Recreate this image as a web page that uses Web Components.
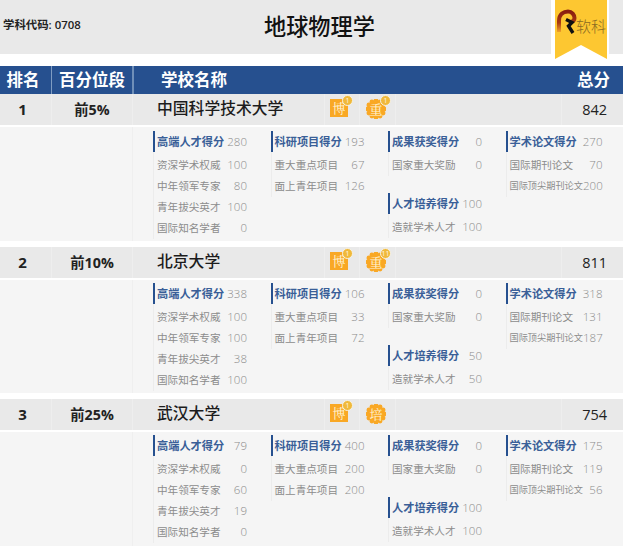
<!DOCTYPE html>
<html lang="zh"><head><meta charset="utf-8"><title>地球物理学</title>
<style>
html,body{margin:0;padding:0;background:#fff;height:546px;overflow:hidden;font-family:"Open Sans","Noto Sans CJK SC",sans-serif}
</style></head><body>
<rk-header code="0708" name="地球物理学"></rk-header>
<rk-head></rk-head>

<rk-school rank="1" pct="前5%" name="中国科学技术大学" score="842">
  <rk-badge kind="square" text="博" num="1"></rk-badge><rk-badge kind="round" text="重" num="1"></rk-badge>
  <rk-col slot="c1"><rk-group title="高端人才得分" score="280"><rk-item l="资深学术权威" v="100"></rk-item><rk-item l="中年领军专家" v="80"></rk-item><rk-item l="青年拔尖英才" v="100"></rk-item><rk-item l="国际知名学者" v="0"></rk-item></rk-group></rk-col>
  <rk-col slot="c2"><rk-group title="科研项目得分" score="193"><rk-item l="重大重点项目" v="67"></rk-item><rk-item l="面上青年项目" v="126"></rk-item></rk-group></rk-col>
  <rk-col slot="c3"><rk-group title="成果获奖得分" score="0"><rk-item l="国家重大奖励" v="0"></rk-item></rk-group><rk-group title="人才培养得分" score="100"><rk-item l="造就学术人才" v="100"></rk-item></rk-group></rk-col>
  <rk-col slot="c4"><rk-group wide title="学术论文得分" score="270"><rk-item l="国际期刊论文" v="70"></rk-item><rk-item small l="国际顶尖期刊论文" v="200"></rk-item></rk-group></rk-col>
</rk-school>

<rk-school tight rank="2" pct="前10%" name="北京大学" score="811">
  <rk-badge kind="square" text="博" num="1"></rk-badge><rk-badge kind="round" text="重" num="11"></rk-badge>
  <rk-col slot="c1"><rk-group title="高端人才得分" score="338"><rk-item l="资深学术权威" v="100"></rk-item><rk-item l="中年领军专家" v="100"></rk-item><rk-item l="青年拔尖英才" v="38"></rk-item><rk-item l="国际知名学者" v="100"></rk-item></rk-group></rk-col>
  <rk-col slot="c2"><rk-group title="科研项目得分" score="106"><rk-item l="重大重点项目" v="33"></rk-item><rk-item l="面上青年项目" v="72"></rk-item></rk-group></rk-col>
  <rk-col slot="c3"><rk-group title="成果获奖得分" score="0"><rk-item l="国家重大奖励" v="0"></rk-item></rk-group><rk-group title="人才培养得分" score="50"><rk-item l="造就学术人才" v="50"></rk-item></rk-group></rk-col>
  <rk-col slot="c4"><rk-group wide title="学术论文得分" score="318"><rk-item l="国际期刊论文" v="131"></rk-item><rk-item small l="国际顶尖期刊论文" v="187"></rk-item></rk-group></rk-col>
</rk-school>

<rk-school tight style="--dh:114px" rank="3" pct="前25%" name="武汉大学" score="754">
  <rk-badge kind="square" text="博" num="1"></rk-badge><rk-badge kind="round" text="培"></rk-badge>
  <rk-col slot="c1"><rk-group title="高端人才得分" score="79"><rk-item l="资深学术权威" v="0"></rk-item><rk-item l="中年领军专家" v="60"></rk-item><rk-item l="青年拔尖英才" v="19"></rk-item><rk-item l="国际知名学者" v="0"></rk-item></rk-group></rk-col>
  <rk-col slot="c2"><rk-group title="科研项目得分" score="400"><rk-item l="重大重点项目" v="200"></rk-item><rk-item l="面上青年项目" v="200"></rk-item></rk-group></rk-col>
  <rk-col slot="c3"><rk-group title="成果获奖得分" score="0"><rk-item l="国家重大奖励" v="0"></rk-item></rk-group><rk-group title="人才培养得分" score="100"><rk-item l="造就学术人才" v="100"></rk-item></rk-group></rk-col>
  <rk-col slot="c4"><rk-group wide title="学术论文得分" score="175"><rk-item l="国际期刊论文" v="119"></rk-item><rk-item small l="国际顶尖期刊论文" v="56"></rk-item></rk-group></rk-col>
</rk-school>

<script>
const FONT='"Open Sans","Noto Sans CJK SC",sans-serif';
function def(name,render){
  customElements.define(name,class extends HTMLElement{
    connectedCallback(){
      if(this.shadowRoot)return;
      this.attachShadow({mode:'open'}).innerHTML=render(this);
    }
  });
}
const a=(e,n)=>e.getAttribute(n)||'';
def('rk-header',e=>`<style>
:host{display:block;position:relative;height:66px;font-family:${FONT}}
.bar{height:54px;background:#e9e9e9;display:flex;align-items:center;position:relative}
.code{position:absolute;left:3px;top:17px;font-size:11.400px;line-height:16px;font-weight:600;color:#222}
h1{margin:0 0 0 264px;font-size:22.200px;line-height:48px;font-weight:500;color:#111;height:48px}
.gap{position:absolute;left:551px;top:0;width:58px;height:54px;background:#fff}
.rib{position:absolute;left:555px;top:0;width:52px;height:60px}
.rib svg{position:absolute;left:0;top:0}
.t{position:absolute;left:21px;top:16px;font-size:15px;line-height:20px;font-weight:300;color:#8a6b22;white-space:nowrap}
</style><div class="bar"><span class="code">学科代码: ${a(e,'code')}</span><h1>${a(e,'name')}</h1></div>
<div class="gap"></div>
<div class="rib"><svg width="52" height="60" viewBox="0 0 52 60"><defs><linearGradient id="g" x1="0" y1="0" x2="0" y2="1"><stop offset="0" stop-color="#8a1f10"/><stop offset=".55" stop-color="#a83a12"/><stop offset="1" stop-color="#f0a22a"/></linearGradient></defs>
<path d="M0 0H52V59L26 45 0 59Z" fill="#fdc731"/>
<path d="M4 32V21C4 14 9 11.500 13 11.500C17 11.500 19.500 15 19.500 18C19.500 20 18 21.500 16 22" fill="none" stroke="url(#g)" stroke-width="4"/>
<path d="M11 19.500L17 22.500L13.500 26L18 33" fill="none" stroke="#111" stroke-width="3.400"/>
</svg><span class="t">软科</span></div>`);
def('rk-head',()=>`<style>
:host{display:grid;grid-template-columns:51px 1px 80px 2px 1fr auto;height:28px;background:#26508f;color:#fff;font-family:${FONT};font-weight:700;font-size:16.500px;line-height:27px}
span{white-space:nowrap}
.c{text-align:center}.f{padding-right:5px}.d{background:#7f9cc2}.d2{background:#6f8fb8}
.n{padding-left:27px}.s{padding-right:13px}
</style><span class="c f">排名</span><i class="d"></i><span class="c">百分位段</span><i class="d2"></i><span class="n">学校名称</span><span class="s">总分</span>`);
def('rk-badge',e=>{
  const round=a(e,'kind')==='round';
  let p='';
  for(let i=0;i<12;i++){const t=i*Math.PI/6;p+=`<circle cx="${(10+8.2*Math.cos(t)).toFixed(2)}" cy="${(10+8.2*Math.sin(t)).toFixed(2)}" r="2.400"/>`;}
  const num=a(e,'num');
  return `<style>
:host{display:block;position:relative;width:${round?20:18}px;height:${round?20:18}px;font-family:"Noto Serif CJK SC","Noto Sans CJK SC",serif}
svg{position:absolute;left:0;top:0}
.b{position:absolute;inset:0;background:#f9a825}
.x{position:absolute;inset:0;text-align:center;color:#fff4d6;font-size:13px;line-height:${round?20:18}px}
.n{position:absolute;right:-5px;top:-4px;width:9px;height:9px;border-radius:50%;background:#f0b93a;color:#fff8e0;border:1px solid #f6f2e6;font:7px/9px ${FONT};text-align:center;white-space:nowrap;overflow:hidden}
</style>${round?`<svg width="20" height="20" viewBox="0 0 20 20" fill="#f9a825"><circle cx="10" cy="10" r="8.500"/>${p}</svg>`:'<div class="b"></div>'}<div class="x">${a(e,'text')}</div>${num?`<div class="n">${num}</div>`:''}`;
});
def('rk-school',e=>`<style>
:host{display:block;margin-bottom:6px;font-family:${FONT};--pt:4px;--dh:114px}
:host([tight]){--pt:3px;--dh:113px}
.r{display:grid;grid-template-columns:52px 81px 192px 35px 36px 166px 1fr;height:31px;background:#e9e9e9;line-height:31px;color:#222}
.r>*{border-right:1px solid #eeeeee;white-space:nowrap;box-sizing:border-box}
.rk{text-align:center;font-size:15px;font-weight:700;padding-right:6px}
.p{text-align:center;font-size:14.300px;font-weight:700}
.nm{padding-left:24px;font-size:15.800px;font-weight:500;color:#1c1c1c;line-height:28px}
.bd{display:flex;align-items:center;padding-left:5px;padding-bottom:3px}
.bd2{padding-left:6px;padding-bottom:2px}
.sc{text-align:right;font-size:14.500px;border:0;grid-column:7;padding-right:16px}
.d{margin-top:2px;height:var(--dh);background:#f5f5f5;display:grid;grid-template-columns:133px 20px repeat(4,117.500px)}
.d i{border-right:1px solid #efefef}
</style><div class="r"><span class="rk">${a(e,'rank')}</span><span class="p">${a(e,'pct')}</span><span class="nm">${a(e,'name')}</span>
<div class="bd"><slot name="b1"></slot></div><div class="bd bd2"><slot name="b2"></slot></div><span></span><span class="sc">${a(e,'score')}</span></div>
<div class="d"><i></i><span></span><slot name="c1"></slot><slot name="c2"></slot><slot name="c3"></slot><slot name="c4"></slot></div>`);
def('rk-col',()=>`<style>:host{display:flex;flex-direction:column;gap:17px;padding-top:var(--pt,4px)}</style><slot></slot>`);
def('rk-group',e=>`<style>
:host{display:block;width:94px}
:host([wide]){width:97px}
.t{display:flex;justify-content:space-between;height:21px;line-height:22px;border-left:2px solid #26508f;padding-left:2px;white-space:nowrap}
b{font-size:11.200px;font-weight:700;color:#3a5f98}
span{font-size:11.500px;font-weight:300;color:#8c8c8c}
.l{border-left:1px solid #ececec;padding-top:3px}
</style><div class="t"><b>${a(e,'title')}</b><span>${a(e,'score')}</span></div><div class="l"><slot></slot></div>`);
def('rk-item',e=>`<style>
:host{display:flex;justify-content:space-between;height:21px;line-height:20px;padding-left:3px;white-space:nowrap;color:#8c8c8c;font-size:${e.hasAttribute('small')?'9.200px':'10.600px'}}
span+span{font-size:11.500px;font-weight:300}
</style><span>${a(e,'l')}</span><span>${a(e,'v')}</span>`);
document.querySelectorAll('rk-school').forEach(s=>{const b=s.querySelectorAll('rk-badge');b[0].slot='b1';b[1].slot='b2';});
</script>
</body></html>
